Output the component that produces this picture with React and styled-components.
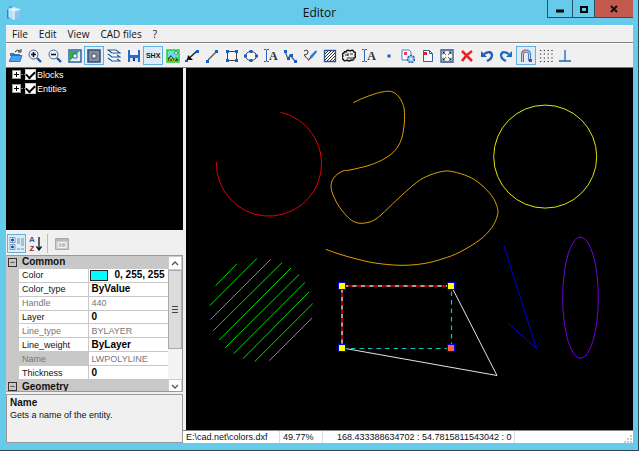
import { useState } from 'react';
import styled, { createGlobalStyle } from 'styled-components';

const GlobalStyle = createGlobalStyle`
  * { box-sizing: border-box; }
  body { margin: 0; overflow: hidden; font: 9px/12px "Liberation Sans", Arial, sans-serif; color: #111; }
  button { font: inherit; color: inherit; padding: 0; border: 0; background: none; }
  table { border-collapse: collapse; }
`;

const tools = [
  ['Open', <><path d="M1 4h4l1 1h5v2H1z" fill="#2d7fd2" /><path d="M0 12.500l3-6h10l-2 6z" fill="#4ba3ee" stroke="#1761b5" strokeWidth=".8" /><path d="M6 3q2-3 5-1M12 0v3H9" fill="none" stroke="#222" /></>],
  ['Zoom in', <><path d="M9 9l4 4" stroke="#1d55aa" strokeWidth="2.4" /><circle cx="5.5" cy="5.5" r="4.5" fill="#eef5fc" stroke="#34659f" /><path d="M3 5.5h5M5.5 3v5" stroke="#111" strokeWidth="1.6" /></>],
  ['Zoom out', <><path d="M9 9l4 4" stroke="#1d55aa" strokeWidth="2.4" /><circle cx="5.5" cy="5.5" r="4.5" fill="#eef5fc" stroke="#34659f" /><path d="M3 5.5h5" stroke="#111" strokeWidth="1.6" /></>],
  ['Top view', <><path d="M1 1h12v12H1z" fill="#fff" stroke="#285fa8" strokeWidth="1.5" /><path d="M2 2h10L9 5H5v4l-3 3z" fill="#28b248" /><path d="M12 2v10H2l3-3h4V5z" fill="#e3f3e6" /><path d="M5 5h4v4H5z" fill="#fff" stroke="#285fa8" /></>],
  ['Shaded view', <><path d="M1 1h12v12H1z" fill="#8b8b8b" stroke="#2c4f86" strokeWidth="1.5" /><path d="M5 5h4v4H5z" fill="#fff" stroke="#24569c" /></>],
  ['Layers', <path d="M1 1h8l4 3H5zM1 5l4 3h8l-3-2M1 9l4 3h8l-3-2" fill="#f8fbff" stroke="#235c9f" strokeWidth="1.2" />],
  ['Save', <><path d="M1 1h12v12H1z" fill="#2868c8" /><path d="M3 1h8v5H3z" fill="#e9f4ff" /><path d="M3 9h8v4H3z" fill="#d5e4f5" /><path d="M6 9h2v3H6z" fill="#123e83" /></>],
  ['SHX fonts', 'SHX'],
  ['Image', <><path d="M1 1h12v12H1z" fill="#65ddf7" stroke="#20d42a" strokeWidth="1.5" /><path d="M2 12V9l3-3 3 4 2-2 2 2v2z" fill="#31591b" /><circle cx="10" cy="4" r="1.5" fill="#fff" stroke="#333" strokeWidth=".6" /><path d="M3 12l2-4 2 4M8 12l2-3" stroke="#d7d939" fill="none" /></>],
  ['Leader', <><path d="M1 12L12 2" stroke="#222" strokeWidth="1.5" /><path d="M2 11l1-5 5 5z" fill="#111" /><path d="M11 1h3v3h-3zM0 11h3v2H0z" fill="#185bcc" /></>],
  ['Line', <><path d="M3 11l8-8" stroke="#555" strokeWidth="1.2" /><path d="M1 11h3v3H1zM10 1h3v3h-3z" fill="#185bcc" /></>],
  ['Rectangle', <><path d="M2.500 2.500h9v9h-9z" fill="#f8f8ef" stroke="#444" /><path d="M1 1h3v3H1zM10 1h3v3h-3zM1 10h3v3H1zM10 10h3v3h-3z" fill="#185bcc" /></>],
  ['Ellipse', <><ellipse cx="7" cy="7" rx="5.5" ry="4.5" fill="#f8f8ef" stroke="#444" /><path d="M5.5 1h3v3h-3zM5.5 10h3v3h-3zM0 5.5h3v3H0zM11 5.5h3v3h-3z" fill="#185bcc" /></>],
  ['Text', 'A'],
  ['Polyline', <><path d="M2 2l3 8 2-4 5 6" fill="none" stroke="#555" strokeWidth="1.2" /><path d="M1 1h3v3H1zM4 8h3v3H4zM7 5h3v3H7zM11 11h3v3h-3z" fill="#185bcc" /></>],
  ['Sketch', <><path d="M1 2q4-2 4 1T1 6q3 4 5 5" fill="none" stroke="#333" /><path d="M13 1l1 2-5 6-3 2 1-4z" fill="#2d7bd2" /><path d="M5 10l2-1v2l-2 1z" fill="#e33" /></>],
  ['Hatch', <><path d="M1.5 1.5h11v11h-11z" fill="#fff" stroke="#285394" strokeWidth="1.3" /><path d="M2 5l3-3M2 8l6-6M2 11l9-9M4 12l8-8M7 12l5-5M10 12l2-2" stroke="#333" /></>],
  ['Cloud', <><path d="M2 4q0-2 2-1 1-3 4-1 3-2 4 1 3 1 1 3 1 3-1 3 0 3-3 2-2 2-4 0-3 2-4-1-2-1 0-3-2-2 1-3z" fill="#eee" stroke="#111" strokeWidth="1.4" /><path d="M3 6h3M8 5h3M5 9h6M6 4v3" stroke="#222" /></>],
  ['Multiline text', 'A'],
  ['Point', <path d="M5.5 5.5h3v3h-3z" fill="#185bcc" />],
  ['Block', <><path d="M1 1h7l2 2v8H1z" fill="#fff" stroke="#4681cb" /><path d="M3 3h3v3H3z" fill="#e44" /><circle cx="10" cy="10" r="3.5" fill="#99c8f2" stroke="#225da0" strokeWidth="1.5" strokeDasharray="2 1" /><circle cx="10" cy="10" r="1" fill="#fff" /></>],
  ['Insert', <><path d="M2.5 1.5h6l3 3v8h-9z" fill="#f4f9ff" stroke="#355f9e" /><path d="M8.5 1.5v3h3" fill="none" stroke="#355f9e" /><path d="M3 3h3v3H3z" fill="#e32020" /></>],
  ['Fit', <><path d="M1 1h12v12H1z" fill="#f7f7ee" stroke="#285394" strokeWidth="1.3" /><path d="M3 3l3 3M11 3L8 6M3 11l3-3M11 11L8 8" stroke="#555" /><path d="M2.500 2.500h3l-3 3zM11.500 2.500h-3l3 3zM2.500 11.500h3l-3-3zM11.500 11.500h-3l3-3z" fill="#222" /></>],
  ['Delete', <path d="M2 2q4 4 10 10M12 2Q6 6 2 12" stroke="#e32127" strokeWidth="2.5" fill="none" />],
  ['Undo', <><path d="M4 5q7-4 8 1 0 4-5 6" fill="none" stroke="#1d5dbb" strokeWidth="2.3" /><path d="M1 2v6h6z" fill="#1d5dbb" /></>],
  ['Redo', <><path d="M10 5Q3 1 2 6q0 4 5 6" fill="none" stroke="#1d6dc0" strokeWidth="2.3" /><path d="M13 2v6H7z" fill="#1d6dc0" /></>],
  ['Snap', <><path d="M3.500 13V5q0-3 3.500-3" fill="none" stroke="#c34b4b" strokeWidth="3" /><path d="M7 2q3.500 0 3.500 3v7" fill="none" stroke="#4c85bf" strokeWidth="3" /><path d="M3.500 13V5q0-3 3.500-3t3.500 3v7" fill="none" stroke="#dfe5ef" strokeWidth=".8" /><path d="M10 10h3v3h-3z" fill="#e32020" /></>],
  ['Grid', <path d="M1 1.500h13M1 5h13M1 9h13M1 12.500h13" stroke="#222" strokeWidth="1.2" strokeDasharray="1.200 2.600" />],
  ['Ortho', <path d="M7 1v11M1 12h12" stroke="#235fb2" strokeWidth="1.3" />],
];

const properties = [
  ['Color', '0, 255, 255'],
  ['Color_type', 'ByValue'],
  ['Handle', '440', true],
  ['Layer', '0'],
  ['Line_type', 'BYLAYER', true],
  ['Line_weight', 'ByLayer'],
  ['Name', 'LWPOLYLINE', true],
  ['Thickness', '0'],
];

const hatch = [
  [215.7, 285.7, 236.7, 264], [209.7, 305.7, 257, 258.3], [210.3, 319.7, 270.7, 259.3],
  [213.3, 330.7, 282, 262.7], [219.3, 340, 291, 268], [225.3, 347.7, 299, 274.7],
  [233.7, 353.7, 305, 282.3], [243, 358.7, 309, 292], [255, 361.3, 312.7, 303.7],
  [269.3, 360.7, 312, 318],
];

const spline = [
  [353.3, 102.7], [363.3, 98], [376.7, 93.3], [386.7, 91.3], [392.7, 92], [398.3, 96],
  [402.3, 102.7], [404.3, 110], [404.3, 123.3], [401.7, 138.3], [396.7, 148.3], [390, 155],
  [380, 161], [368, 165.7], [350, 170], [343, 171], [335.3, 176], [331.3, 183.3], [332, 191.7],
  [337.7, 204.3], [346.7, 216], [353.3, 221.3], [361, 223.3], [371.7, 221.3], [381, 215],
  [396.7, 200], [416.7, 182.3], [430, 175], [443.3, 171.3], [453, 171.7], [468, 176.3],
  [480, 183.7], [491.7, 195.7], [497.3, 207.3], [497.3, 216], [491.7, 227.7], [480, 239.7],
  [460, 252], [443, 258.7], [423, 263.7], [400, 265.3], [375, 263], [356.7, 259], [340, 254.3],
  [325.7, 249.3],
];

// Catmull-Rom through the fit points
function smoothPath(points) {
  return points.slice(1).reduce((d, p, i) => {
    const a = points[i];
    const before = points[i - 1] || a;
    const after = points[i + 2] || p;
    return `${d}C${a[0] + (p[0] - before[0]) / 6} ${a[1] + (p[1] - before[1]) / 6} ${p[0] - (after[0] - a[0]) / 6} ${p[1] - (after[1] - a[1]) / 6} ${p[0]} ${p[1]}`;
  }, `M${points[0][0]} ${points[0][1]}`);
}

function ToolIcon({ name, art }) {
  if (art === 'SHX') return <ShxText>SHX</ShxText>;
  if (art === 'A') {
    return (
      <TextTool>
        <svg width="5" height="13" viewBox="0 0 5 13" aria-hidden="true">
          <path d="M0 .5h2l.5.5.5-.5h2M2.5 1v11M0 12.5h2l.5-.5.5.5h2" fill="none" stroke="#2866b9" />
        </svg>
        A
      </TextTool>
    );
  }
  return <svg width="14" height="14" viewBox="0 0 14 14" role="img" aria-label={name}>{art}</svg>;
}

function Drawing() {
  return (
    <Canvas viewBox="186 68 447 362" role="img" aria-label="Drawing">
      <g fill="none" strokeWidth="1">
        <path d="M216.4 162A52.6 52.6 0 1 0 280.5 112.2" stroke="#e00000" />
        <path d={smoothPath(spline)} stroke="#e0a000" />
        <circle cx="545.2" cy="156.6" r="51.5" stroke="#e4e400" />
        <ellipse cx="580.5" cy="297.7" rx="17.8" ry="60.6" stroke="#7400e4" />
        {hatch.map(([x1, y1, x2, y2]) => (
          <line key={x1} x1={x1} y1={y1} x2={x2} y2={y2} stroke="#00e000" />
        ))}
        <path d="M504 246l32.500 102.500L508 323" stroke="#0000e0" />
        <path d="M451.5 286.5l45.5 89-154.5-27.5" stroke="#e4e4e4" />
        <path d="M342 348V286H451" stroke="#a0a0a0" strokeWidth="2" />
        <path d="M342 348V286H451" stroke="#a80000" strokeWidth="2" strokeDasharray="4.5 4" />
        <path d="M342.5 348.5H451.5V286" stroke="#00c8c8" strokeWidth="1.2" strokeDasharray="4.5 4" />
      </g>
      <g fill="#ff0" stroke="#0000e0">
        <rect x="338.5" y="282.5" width="7" height="7" />
        <rect x="447.5" y="282.5" width="7" height="7" />
        <rect x="338.5" y="344.5" width="7" height="7" />
        <rect x="447.5" y="344.5" width="7" height="7" fill="#ff6347" />
      </g>
    </Canvas>
  );
}

function PropertyGrid() {
  return (
    <GridFrame>
      <PropertyTable>
        <colgroup><col width="12" /><col width="69" /><col /></colgroup>
        <tbody>
          <GroupRow><td><Fold aria-label="Collapse Common">−</Fold></td><th colSpan="2">Common</th></GroupRow>
          {properties.map(([name, value, readOnly]) => (
            <PropertyRow key={name} $readOnly={readOnly} $selected={name === 'Name'}>
              <td />
              <th scope="row">{name}</th>
              <td>{name === 'Color' ? <ColorValue><Swatch />{value}</ColorValue> : value}</td>
            </PropertyRow>
          ))}
          <GroupRow><td><Fold aria-label="Collapse Geometry">−</Fold></td><th colSpan="2">Geometry</th></GroupRow>
        </tbody>
      </PropertyTable>
      <ScrollBar>
        <ScrollButton aria-label="Scroll up"><svg width="8" height="5" viewBox="0 0 8 5"><path d="M1 4l3-3 3 3" /></svg></ScrollButton>
        <Thumb><i /><i /><i /></Thumb>
        <Track />
        <ScrollButton aria-label="Scroll down"><svg width="8" height="5" viewBox="0 0 8 5"><path d="M1 1l3 3 3-3" /></svg></ScrollButton>
      </ScrollBar>
    </GridFrame>
  );
}

function App() {
  const [active, setActive] = useState(['Shaded view', 'SHX fonts', 'Snap']);
  const toggle = (name) => setActive(
    active.includes(name) ? active.filter((n) => n !== name) : [...active, name],
  );

  return (
    <Window>
      <GlobalStyle />
      <TitleBar>
        <svg width="16" height="16" viewBox="0 0 16 16" aria-hidden="true">
          <path d="M3 4l5-2.500L14 4l-1 8-5 3-5-3z" fill="#d8f0ff" stroke="#7fc0ea" />
          <path d="M3 4l5 2v9l-5-3z" fill="#b9e0fa" />
          <path d="M8 6l6-2-1 8-5 3z" fill="#8cc4f0" />
          <path d="M3 4l5 2 6-2M8 6v9" fill="none" stroke="#f4fcff" />
          <path d="M1.500 5v8M1 5h1M1 13h2M3 2h3" stroke="#2f83bd" />
        </svg>
        <Title>Editor</Title>
        <WindowButtons>
          <WindowButton aria-label="Minimize" $width={25}><svg width="10" height="10" viewBox="0 0 10 10"><path d="M1 7h8" stroke="#000" strokeWidth="3" /></svg></WindowButton>
          <WindowButton aria-label="Maximize" $width={22}><svg width="10" height="10" viewBox="0 0 10 10"><path d="M2 3h6v5H2z" fill="none" stroke="#000" strokeWidth="2" /></svg></WindowButton>
          <WindowButton aria-label="Close" $width={39} $close><svg width="10" height="10" viewBox="0 0 10 10"><path d="M2 2l6 6M8 2L2 8" stroke="#111" strokeWidth="2" /></svg></WindowButton>
        </WindowButtons>
      </TitleBar>
      <MenuBar>
        {['File', 'Edit', 'View', 'CAD files', '?'].map((item) => <button key={item}>{item}</button>)}
      </MenuBar>
      <ToolBar>
        {tools.map(([name, art]) => (
          <ToolButton key={name} title={name} aria-label={name} $active={active.includes(name)} onClick={() => toggle(name)}>
            <ToolIcon name={name} art={art} />
          </ToolButton>
        ))}
      </ToolBar>
      <Body>
        <Sidebar>
          <Tree>
            {['Blocks', 'Entities'].map((node) => (
              <TreeRow key={node}>
                <Expander aria-label={`Expand ${node}`}>
                  <svg width="7" height="7" viewBox="0 0 7 7"><path d="M1 3.500h5M3.500 1v5" stroke="#000" /></svg>
                </Expander>
                <Branch />
                <label>
                  <CheckBox type="checkbox" defaultChecked />
                  {node}
                </label>
              </TreeRow>
            ))}
          </Tree>
          <PropertyBar>
            <ToolButton aria-label="Categorized" $active>
              <svg width="15" height="15" viewBox="0 0 15 15">
                <path d="M1 1.5h5v5H1zM1 8.5h5v5H1z" fill="#fff" stroke="#7799bc" />
                <path d="M2 4h3M3.5 2.5v3M2 11h3M3.5 9.5v3" stroke="#124995" strokeWidth="1.5" />
                <path d="M8 3h3M8 5h3M8 7h3M12 3h3M12 5h3M12 7h3M12 9h3M8 13h3M12 13h3" stroke="#6f90b8" />
              </svg>
            </ToolButton>
            <SortButton aria-label="Alphabetical">
              <SortLetters><span>A</span><span>Z</span></SortLetters>
              <svg width="6" height="14" viewBox="0 0 6 14"><path d="M3 0v12M.5 9.5L3 13l2.5-3.5" fill="none" stroke="#111" strokeWidth="1.3" /></svg>
            </SortButton>
            <Divider />
            <ToolButton aria-label="Property pages" disabled>
              <svg width="14" height="14" viewBox="0 0 14 14">
                <path d="M.5 1.5h13v11H.5z" fill="#ccc" stroke="#aaa" />
                <path d="M3 5.5h8v5H3z" fill="#ddd" stroke="#f4f4f4" />
                <path d="M1 3h12M4 7h2M7 7h3M4 9h2M7 9h3" stroke="#aaa" />
              </svg>
            </ToolButton>
          </PropertyBar>
          <PropertyGrid />
          <Description>
            <h2>Name</h2>
            <p>Gets a name of the entity.</p>
          </Description>
        </Sidebar>
        <Main>
          <Drawing />
          <StatusBar>
            <StatusCell $width={97}>E:\cad.net\colors.dxf</StatusCell>
            <StatusCell $width={43}>49.77%</StatusCell>
            <StatusCell $width={192} $indent={14}>168.433388634702 : 54.7815811543042 : 0</StatusCell>
            <Grip width="9" height="9" viewBox="0 0 9 9" aria-hidden="true">
              <path d="M6 1h2v2H6zM3 4h2v2H3zM6 4h2v2H6zM0 7h2v2H0zM3 7h2v2H3zM6 7h2v2H6z" fill="#ccc" />
            </Grip>
          </StatusBar>
        </Main>
      </Body>
    </Window>
  );
}

export default App;

const Window = styled.div`
  display: flex;
  flex-direction: column;
  height: 100vh;
  padding: 0 5px 7px 6px;
  background: #66cbea;
  border-right: 1px solid #34454d;
  border-bottom: 1px solid #34454d;
`;

const TitleBar = styled.header`
  display: grid;
  grid-template-columns: 1fr auto 1fr;
  align-items: center;
  height: 25px;
`;

const Title = styled.h1`
  margin: 0;
  font: 12px/16px "Open Sans", "Noto Sans", sans-serif;
`;

const WindowButtons = styled.div`
  display: flex;
  justify-content: flex-end;
  align-self: start;
`;

const WindowButton = styled.button`
  display: grid;
  place-items: center;
  width: ${(p) => p.$width}px;
  height: 18px;
  background: ${(p) => (p.$close ? '#c4594f' : 'transparent')};
  border: solid #28505e;
  border-width: 0 0 1px 1px;
`;

const MenuBar = styled.nav`
  display: flex;
  gap: 11px;
  height: 18px;
  padding-left: 6px;
  font: 10px/16px "Open Sans", "Noto Sans", sans-serif;
  background: #f0f0f0;
  border-top: 1px solid #fff;
  border-bottom: 1px solid #808080;
`;

const ToolBar = styled.div`
  display: grid;
  grid-template-columns: repeat(29, minmax(0, 1fr));
  padding-right: 58px;
  height: 25px;
  align-items: center;
  background: #f0f0f0;
  border-top: 1px solid #fff;
  border-bottom: 1px solid #777;
`;

const ToolButton = styled.button`
  display: grid;
  place-items: center;
  min-width: 19px;
  height: 19px;
  background: ${(p) => (p.$active ? '#dcecf8' : 'transparent')};
  border: 1px solid ${(p) => (p.$active ? '#62b0dc' : 'transparent')};
`;

const ShxText = styled.span`
  font: bold 7px/10px "Liberation Sans", Arial, sans-serif;
`;

const TextTool = styled.span`
  display: flex;
  align-items: center;
  font: bold 12px/14px "Liberation Serif", serif;
  color: #333;
`;

const Body = styled.div`
  flex: 1;
  display: grid;
  grid-template-columns: 177px minmax(0, 1fr);
  min-height: 0;
`;

const Sidebar = styled.aside`
  display: flex;
  flex-direction: column;
  min-height: 0;
  background: #f0f0f0;
`;

const Tree = styled.div`
  flex: 1;
  display: flex;
  flex-direction: column;
  gap: 1px;
  padding-left: 6px;
  background: #000;
  color: #fff;
`;

const TreeRow = styled.div`
  display: flex;
  align-items: center;
  height: 13px;

  label {
    display: flex;
    align-items: center;
    gap: 1px;
  }
`;

const Expander = styled.button`
  display: grid;
  place-items: center;
  width: 9px;
  height: 9px;
  background: #fff;
  border: 1px solid #999;
`;

const Branch = styled.span`
  width: 4px;
  border-top: 1px dotted #777;
`;

const CheckBox = styled.input`
  appearance: none;
  display: grid;
  place-items: center;
  width: 11px;
  height: 11px;
  margin: 0;
  background: #fff;
  border: 1px solid #ccc;

  &:checked::after {
    content: '';
    width: 7px;
    height: 4px;
    margin-bottom: 2px;
    border: solid #000;
    border-width: 0 0 2px 2px;
    transform: rotate(-45deg);
  }
`;

const PropertyBar = styled.div`
  display: flex;
  align-items: center;
  gap: 3px;
  height: 25px;
  padding: 2px 1px 0;
`;

const SortButton = styled.button`
  display: flex;
  align-items: center;
  gap: 1px;
  width: 14px;
`;

const SortLetters = styled.span`
  display: grid;
  font: bold 8px/9px "Liberation Sans", Arial, sans-serif;
  color: #2d5ba8;

  span + span { color: #9b2424; }
`;

const Divider = styled.div`
  width: 1px;
  height: 19px;
  margin: 0 1px;
  background: #bbb;
`;

const GridFrame = styled.div`
  display: grid;
  grid-template-columns: minmax(0, 1fr) 14px;
  height: 137px;
  overflow: hidden;
  border: 1px solid #999;
  border-left-color: #c8c8c8;
`;

const PropertyTable = styled.table`
  width: 100%;
  height: 137px;
  table-layout: fixed;
  background: #fff;

  td, th {
    padding: 0 0 0 3px;
    overflow: hidden;
    line-height: 12px;
    text-align: left;
    white-space: nowrap;
  }

  td:first-child {
    padding: 0 0 0 1px;
    background: #c8c8c8;
  }
`;

const GroupRow = styled.tr`
  font-size: 10px;
  background: #c8c8c8;
`;

const PropertyRow = styled.tr`
  th {
    font-weight: normal;
    color: ${(p) => (p.$readOnly ? '#777' : '#111')};
    background: ${(p) => (p.$selected ? '#c8c8c8' : '#fff')};
    border: solid #c8c8c8;
    border-width: 0 1px 1px 0;
  }

  th + td {
    font-size: ${(p) => (p.$readOnly ? 9 : 10)}px;
    font-weight: ${(p) => (p.$readOnly ? 'normal' : 'bold')};
    color: ${(p) => (p.$readOnly ? '#777' : '#000')};
    border-bottom: 1px solid #c8c8c8;
  }
`;

const Fold = styled.button`
  display: block;
  width: 9px;
  height: 9px;
  font-size: 9px;
  line-height: 6px;
  border: 1px solid #333;
`;

const ColorValue = styled.span`
  display: flex;
  align-items: center;
  gap: 7px;
  margin-left: -2px;
`;

const Swatch = styled.span`
  flex: none;
  width: 18px;
  height: 11px;
  background: #0ff;
  border: 1px solid #222;
`;

const ScrollBar = styled.div`
  display: flex;
  flex-direction: column;
`;

const ScrollButton = styled.button`
  display: grid;
  place-items: center;
  flex: none;
  height: 14px;
  background: #fff;
  border: 1px solid #ccc;

  path { fill: none; stroke: #555; stroke-width: 1.3; }
`;

const Thumb = styled.div`
  display: flex;
  flex-direction: column;
  align-items: center;
  justify-content: center;
  gap: 2px;
  height: 79px;
  background: #dcdcdc;
  border: 1px solid #aaa;

  i { width: 6px; height: 1px; background: #444; }
`;

const Track = styled.div`
  flex: 1;
  background: #f4f4f4;
`;

const Description = styled.section`
  height: 49px;
  margin-top: 2px;
  padding: 2px 3px;
  border: 1px solid #999;

  h2 { margin: 0; font-size: 10px; line-height: 12px; }
  p { margin: 0; line-height: 13px; }
`;

const Main = styled.main`
  display: flex;
  flex-direction: column;
  min-width: 0;
  min-height: 0;
`;

const Canvas = styled.svg`
  flex: 1;
  min-height: 0;
  background: #000;
  border-left: 3px solid #f0f0f0;
`;

const StatusBar = styled.footer`
  display: flex;
  height: 13px;
  background: #fff;
  border-top: 1px solid #888;
`;

const StatusCell = styled.span`
  width: ${(p) => p.$width}px;
  padding-left: ${(p) => p.$indent || 3}px;
  white-space: nowrap;
  border-right: 1px solid #ddd;
`;

const Grip = styled.svg`
  align-self: end;
  margin-left: auto;
`;
